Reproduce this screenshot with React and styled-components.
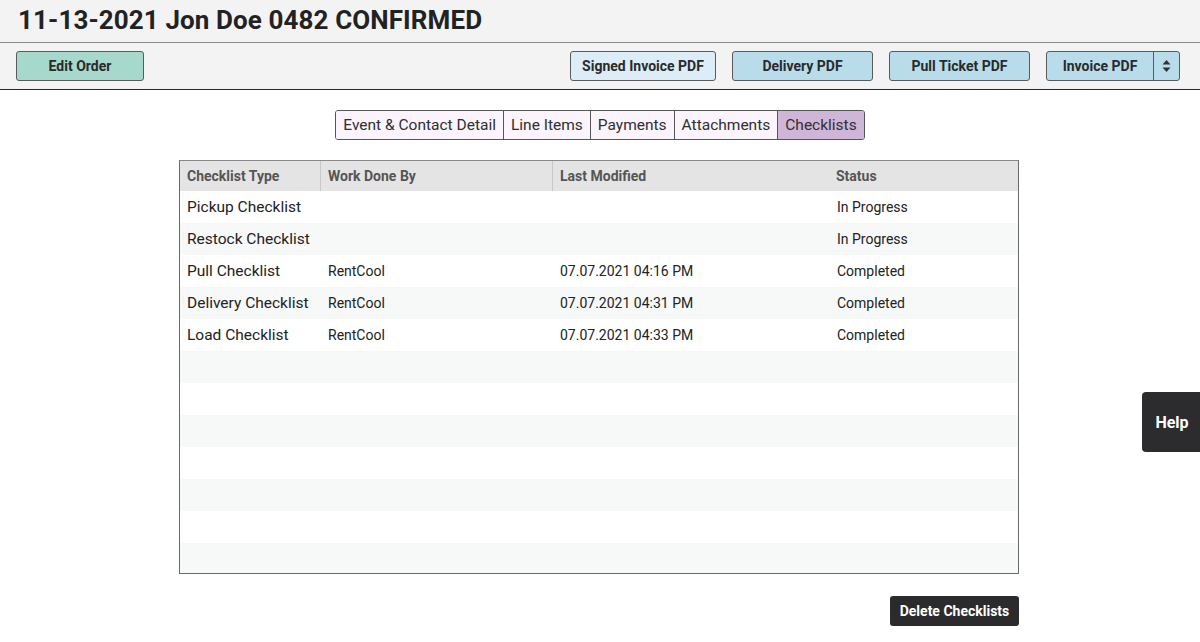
import React from "react";
import styled, { createGlobalStyle } from "styled-components";

const Global = createGlobalStyle`
  html, body { margin: 0; padding: 0; background: #fff; }
  body { font-family: Roboto, "Liberation Sans", Arial, sans-serif; color: #222; }
  * { box-sizing: border-box; }
`;

const Page = styled.div`
  width: 1200px;
  height: 642px;
  position: relative;
  overflow: hidden;
  background: #fff;
`;

const Header = styled.header`
  height: 43px;
  background: #f3f3f3;
  border-bottom: 1px solid #8a8a8a;
  display: flex;
  align-items: center;
  padding: 0 18px;
`;

const Title = styled.h1`
  margin: 0;
  font-size: 26px;
  font-weight: 700;
  color: #222;
  letter-spacing: 0.1px;
  line-height: 1;
  margin-top: -3px;
`;

const Toolbar = styled.div`
  height: 47px;
  background: #f3f3f3;
  border-bottom: 1px solid #2a2a2a;
  display: flex;
  align-items: center;
  padding: 0 20px 0 16px;
  gap: 16px;
`;

const Spacer = styled.div`
  flex: 1;
`;

const Btn = styled.button`
  height: 30px;
  width: ${(p) => p.$w}px;
  background: ${(p) => p.$bg};
  border: 1px solid #5a5a5a;
  border-radius: 3px;
  font-family: Roboto, "Liberation Sans", Arial, sans-serif;
  font-weight: 700;
  font-size: 14px;
  color: #2a2a2a;
  padding: 0;
  display: flex;
  align-items: center;
  justify-content: center;
`;

const SplitBtn = styled.div`
  height: 30px;
  display: flex;
  border: 1px solid #5a5a5a;
  border-radius: 3px;
  background: #b9dcea;
  overflow: hidden;
`;

const SplitMain = styled.span`
  width: 107px;
  display: flex;
  align-items: center;
  justify-content: center;
  font-weight: 700;
  font-size: 14px;
  color: #2a2a2a;
  border-right: 1px solid #5a5a5a;
`;

const SplitArrow = styled.span`
  width: 25px;
  display: flex;
  align-items: center;
  justify-content: center;
`;

const Tabs = styled.div`
  display: flex;
  justify-content: center;
  margin-top: 20px;
`;

const TabGroup = styled.div`
  display: flex;
  border: 1px solid #555;
  border-radius: 3px;
  overflow: hidden;
  height: 30px;
`;

const Tab = styled.div`
  background: ${(p) => (p.$active ? "#cfb5d8" : "#fbf4fc")};
  border-left: ${(p) => (p.$first ? "none" : "1px solid #555")};
  font-size: 15.5px;
  color: #2f2f2f;
  display: flex;
  align-items: center;
  padding: 0 ${(p) => p.$pad || 7}px;
`;

const TableWrap = styled.div`
  margin: 20px 0 0 179px;
  width: 840px;
  height: 414px;
  border: 1px solid #6a6a6a;
  border-top-color: #888;
  overflow: hidden;
`;

const Grid = styled.div`
  display: grid;
  grid-template-columns: 140px 232px 277px 1fr;
`;

const HeadCell = styled.div`
  height: 30px;
  background: #e4e4e4;
  border-left: ${(p) => (p.$divider ? "1px solid #c9c9c9" : "none")};
  font-weight: 700;
  font-size: 14px;
  color: #555;
  display: flex;
  align-items: center;
  padding: 0 7px;
`;

const Cell = styled.div`
  height: 32px;
  background: ${(p) => (p.$alt ? "#f7f8f8" : "#fff")};
  font-size: ${(p) => (p.$big ? "15.5px" : "14px")};
  color: #222;
  display: flex;
  align-items: center;
  padding: 0 8px 0 ${(p) => (p.$big ? 7 : 8)}px;
  white-space: nowrap;
`;

const Footer = styled.div`
  display: flex;
  justify-content: flex-end;
  width: 1019px;
  margin-top: 22px;
`;

const DarkBtn = styled.button`
  height: 30px;
  width: 129px;
  background: #2b2b2d;
  color: #fff;
  border: none;
  border-radius: 3px;
  font-family: Roboto, "Liberation Sans", Arial, sans-serif;
  font-weight: 700;
  font-size: 14px;
  padding: 0;
`;

const Help = styled.div`
  position: absolute;
  right: 0;
  top: 392px;
  width: 58px;
  height: 60px;
  background: #2c2c2e;
  border-radius: 4px 0 0 4px;
  color: #fff;
  font-weight: 700;
  font-size: 16px;
  display: flex;
  align-items: center;
  justify-content: center;
  padding-left: 2px;
`;

const rows = [
  ["Pickup Checklist", "", "", "In Progress"],
  ["Restock Checklist", "", "", "In Progress"],
  ["Pull Checklist", "RentCool", "07.07.2021 04:16 PM", "Completed"],
  ["Delivery Checklist", "RentCool", "07.07.2021 04:31 PM", "Completed"],
  ["Load Checklist", "RentCool", "07.07.2021 04:33 PM", "Completed"],
];
while (rows.length < 12) rows.push(["", "", "", ""]);

export default function App() {
  return (
    <Page>
      <Global />
      <Header>
        <Title>11-13-2021 Jon Doe 0482 CONFIRMED</Title>
      </Header>
      <Toolbar>
        <Btn $w={128} $bg="#a6d8cc">Edit Order</Btn>
        <Spacer />
        <Btn $w={146} $bg="#dcedf7">Signed Invoice PDF</Btn>
        <Btn $w={141} $bg="#b9dcea">Delivery PDF</Btn>
        <Btn $w={141} $bg="#b9dcea">Pull Ticket PDF</Btn>
        <SplitBtn>
          <SplitMain>Invoice PDF</SplitMain>
          <SplitArrow>
            <svg width="9" height="14" viewBox="0 0 9 14">
              <path d="M4.5 1 L8.5 5.5 L0.5 5.5 Z" fill="#333" />
              <path d="M4.5 13 L8.5 8.5 L0.5 8.5 Z" fill="#333" />
            </svg>
          </SplitArrow>
        </SplitBtn>
      </Toolbar>
      <Tabs>
        <TabGroup>
          <Tab $first>Event &amp; Contact Detail</Tab>
          <Tab>Line Items</Tab>
          <Tab>Payments</Tab>
          <Tab>Attachments</Tab>
          <Tab $active>Checklists</Tab>
        </TabGroup>
      </Tabs>
      <TableWrap>
        <Grid>
          <HeadCell>Checklist Type</HeadCell>
          <HeadCell $divider>Work Done By</HeadCell>
          <HeadCell $divider>Last Modified</HeadCell>
          <HeadCell>Status</HeadCell>
          {rows.map((r, i) =>
            r.map((c, j) => (
              <Cell key={i + "-" + j} $alt={i % 2 === 1} $big={j === 0}>
                {c}
              </Cell>
            ))
          )}
        </Grid>
      </TableWrap>
      <Footer>
        <DarkBtn>Delete Checklists</DarkBtn>
      </Footer>
      <Help>Help</Help>
    </Page>
  );
}
